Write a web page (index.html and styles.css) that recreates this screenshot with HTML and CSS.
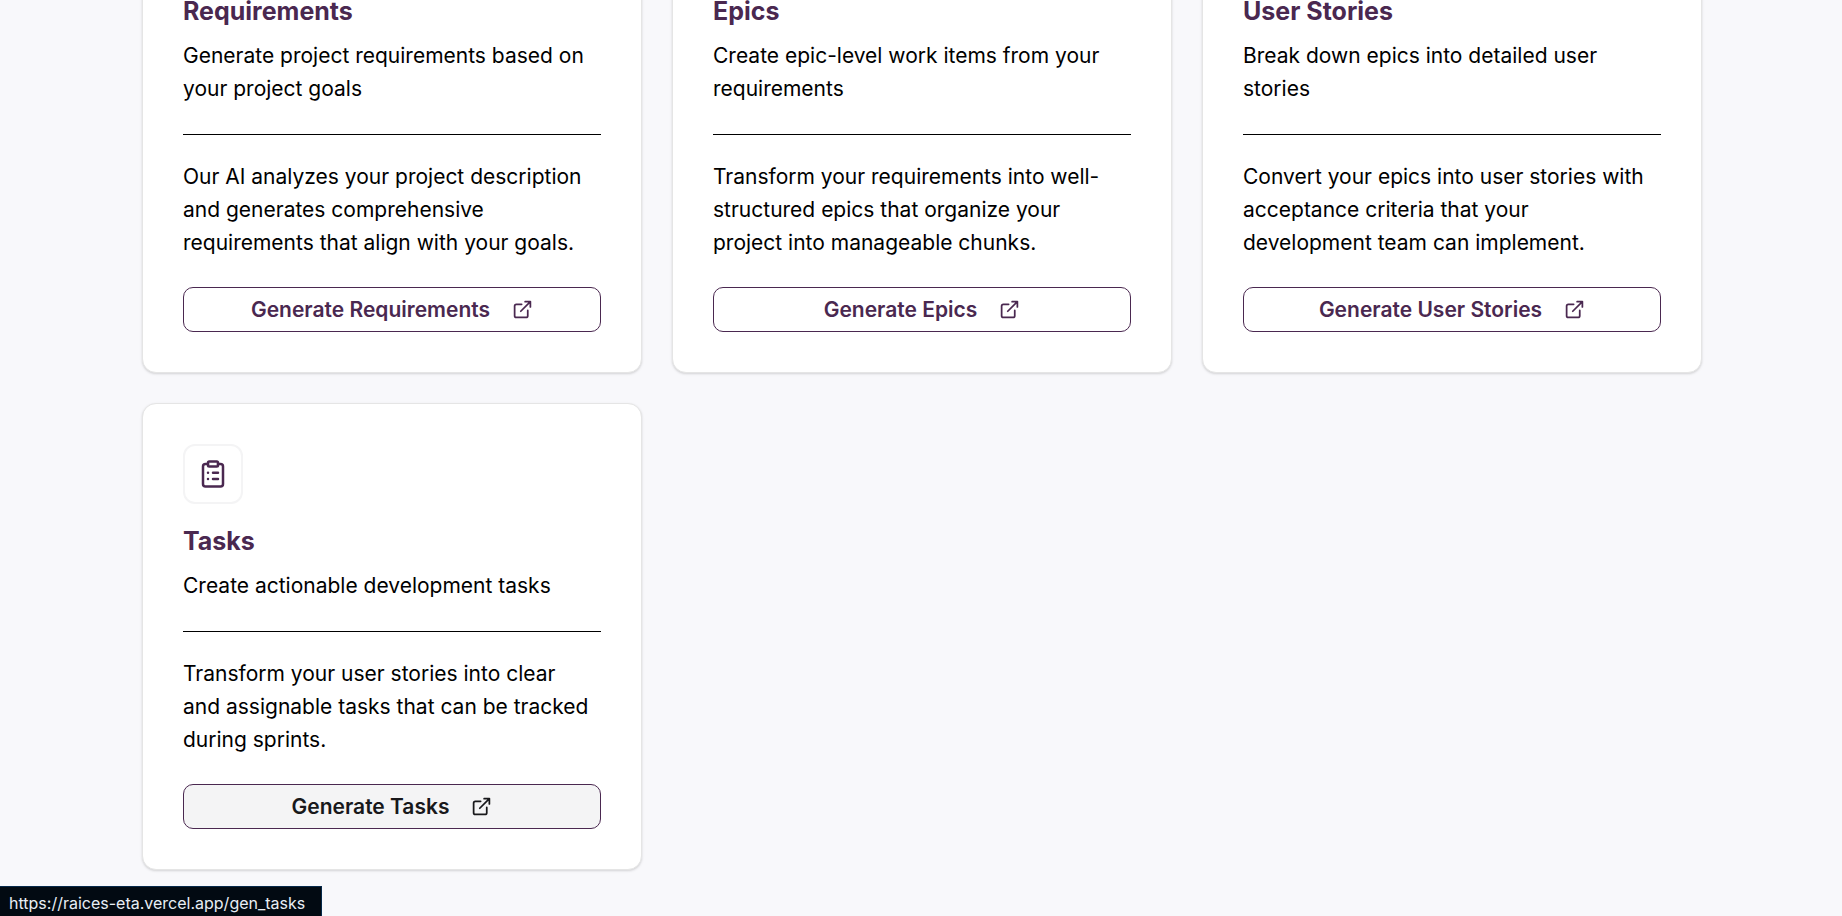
FILE: index.html
```html
<!DOCTYPE html>
<html lang="en">
<head>
<meta charset="utf-8">
<title>Raices</title>
<link rel="stylesheet" href="styles.css">
</head>
<body>
<svg class="sprite" aria-hidden="true">
  <symbol id="external" viewBox="0 0 24 24"><path d="M18 13v6a2 2 0 0 1-2 2H5a2 2 0 0 1-2-2V8a2 2 0 0 1 2-2h6M15 3h6v6M10 14 21 3"/></symbol>
  <symbol id="clipboard" viewBox="0 0 24 24"><rect x="8" y="2" width="8" height="4" rx="1"/><path d="M16 4h2a2 2 0 0 1 2 2v14a2 2 0 0 1-2 2H6a2 2 0 0 1-2-2V6a2 2 0 0 1 2-2h2M12 11h4M12 16h4M8 11h.01M8 16h.01"/></symbol>
</svg>
<main class="page">
  <div class="grid">
    <article class="card">
      <div class="badge"><svg class="badge-icon"><use href="#clipboard"/></svg></div>
      <h2 class="title">Requirements</h2>
      <p class="summary">Generate project requirements based on your project goals</p>
      <hr class="rule">
      <p class="detail">Our AI analyzes your project description and generates comprehensive requirements that align with your goals.</p>
      <a class="action" href="#requirements">Generate Requirements<svg class="action-icon"><use href="#external"/></svg></a>
    </article>
    <article class="card">
      <div class="badge"><svg class="badge-icon"><use href="#clipboard"/></svg></div>
      <h2 class="title">Epics</h2>
      <p class="summary">Create epic-level work items from your requirements</p>
      <hr class="rule">
      <p class="detail">Transform your requirements into well-structured epics that organize your project into manageable chunks.</p>
      <a class="action" href="#epics">Generate Epics<svg class="action-icon"><use href="#external"/></svg></a>
    </article>
    <article class="card">
      <div class="badge"><svg class="badge-icon"><use href="#clipboard"/></svg></div>
      <h2 class="title">User Stories</h2>
      <p class="summary">Break down epics into detailed user stories</p>
      <hr class="rule">
      <p class="detail">Convert your epics into user stories with acceptance criteria that your development team can implement.</p>
      <a class="action" href="#stories">Generate User Stories<svg class="action-icon"><use href="#external"/></svg></a>
    </article>
    <article class="card">
      <div class="badge"><svg class="badge-icon"><use href="#clipboard"/></svg></div>
      <h2 class="title">Tasks</h2>
      <p class="summary">Create actionable development tasks</p>
      <hr class="rule">
      <p class="detail">Transform your user stories into clear and&nbsp;assignable tasks that can be tracked during sprints.</p>
      <a class="action active" href="#tasks">Generate Tasks<svg class="action-icon"><use href="#external"/></svg></a>
    </article>
  </div>
</main>
<div class="status">https://raices-eta.vercel.app/gen_tasks</div>
</body>
</html>
```
FILE: styles.css
```css
* { box-sizing: border-box; }
body {
  margin: 0;
  background: #f8f8fb;
  color: #000;
  font: 21px/33px Inter, "Liberation Sans", sans-serif;
}
.sprite { position: absolute; width: 0; height: 0; }
/* The view rests at the end of the list. */
.page {
  display: flex;
  flex-direction: column;
  justify-content: flex-end;
  height: 100vh;
  padding: 0 23px 46px 25px;
  overflow: hidden;
}
.grid {
  display: grid;
  grid-template-columns: repeat(3, minmax(0, 1fr));
  gap: 30px;
  width: 100%;
  max-width: 1560px;
  margin: 0 auto;
}
.card {
  display: flex;
  flex-direction: column;
  padding: 40px;
  border: 1px solid #e5e5e5;
  border-radius: 14px;
  background: #fff;
  box-shadow: 0 1px 3px rgba(0, 0, 0, .1), 0 1px 2px rgba(0, 0, 0, .06);
}
.badge {
  display: flex;
  align-items: center;
  justify-content: center;
  width: 60px;
  height: 60px;
  margin-bottom: 18px;
  border: 2px solid #f4f4f5;
  border-radius: 12px;
}
.badge-icon, .action-icon {
  fill: none;
  stroke: currentColor;
  stroke-width: 2;
  stroke-linecap: round;
  stroke-linejoin: round;
}
.badge-icon { width: 30px; height: 30px; color: #4a2850; }
.title {
  margin: 0 0 9px;
  color: #4a2850;
  font-size: 25px;
  font-weight: 700;
  line-height: 38px;
}
.summary, .detail { margin: 0; }
.rule {
  width: 100%;
  margin: 29px 0 25px;
  border: 0;
  border-top: 1px solid #000;
}
.detail { margin-bottom: 28px; }
.action {
  display: flex;
  align-items: center;
  justify-content: center;
  gap: 22px;
  height: 45px;
  margin-top: auto;
  border: 1px solid #4a2850;
  border-radius: 10px;
  color: #4a2850;
  font-weight: 600;
  text-decoration: none;
}
.active { background: #f4f4f5; color: #18181b; }
.action-icon { width: 21px; height: 21px; }
.status {
  position: fixed;
  bottom: 0;
  left: 0;
  padding: 3px 16px 0 9px;
  border: solid #06294a;
  border-width: 1px 1px 0 0;
  background: #020a12;
  color: #e8eef5;
  font-size: 16px;
  line-height: 26px;
}
```
